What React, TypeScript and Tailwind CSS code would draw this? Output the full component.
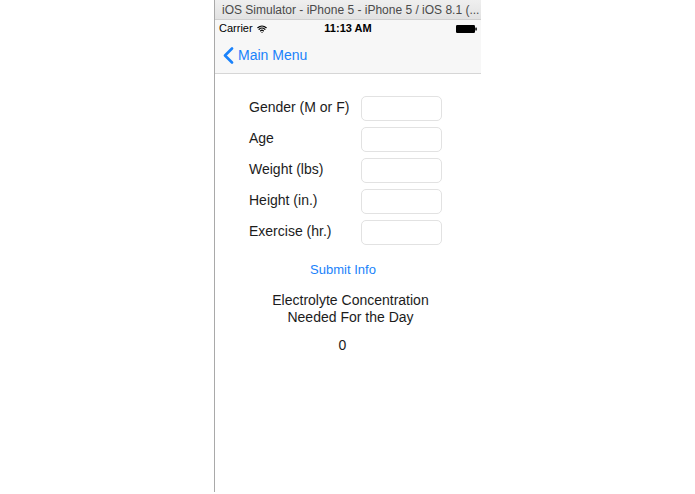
import { Wifi } from 'lucide-react';

const fields = ['Gender (M or F)', 'Age', 'Weight (lbs)', 'Height (in.)', 'Exercise (hr.)'];

const BatteryIcon = () => (
  <svg width="21" height="8" viewBox="0 0 21 8">
    <rect x="0" y="0" width="19" height="8" rx="1.2" fill="#000" />
    <rect x="19.3" y="2.5" width="1.5" height="3" rx="0.5" fill="#000" />
  </svg>
);

const BackChevron = () => (
  <svg width="11" height="17" viewBox="0 0 11 17">
    <path d="M9 1.5 L2 8.5 L9 15.5" fill="none" stroke="#1a82fb" strokeWidth="2.6" strokeLinecap="round" strokeLinejoin="round" />
  </svg>
);

const App = () => {
  return (
    <div className="w-[695px] h-[494px] bg-white overflow-hidden" style={{ fontFamily: '"Liberation Sans", Arial, sans-serif' }}>
      <div className="mx-auto w-[267px] h-[492px] border-l border-[#a9a9a9] flex flex-col">
        {/* simulator title bar */}
        <div className="h-[20px] bg-gradient-to-b from-[#efefef] to-[#e2e2e2] border-b border-[#cfcfcf] flex items-center pl-[7px] text-[12px] text-[#4a4a4a] whitespace-nowrap">
          iOS Simulator - iPhone 5 - iPhone 5 / iOS 8.1 (...
        </div>

        {/* status + nav */}
        <div className="bg-[#f7f7f7] border-b border-[#d6d6d6]">
          <div className="h-[17px] relative flex items-center px-[4px] text-[11px] text-black">
            <span className="flex items-center gap-[4px]">
              Carrier
              <Wifi size={10} strokeWidth={3} />
            </span>
            <span className="absolute left-0 right-0 text-center font-bold text-[11px] pointer-events-none">11:13 AM</span>
            <span className="ml-auto flex items-center">
              <BatteryIcon />
            </span>
          </div>
          <div className="h-[36px] flex items-center pl-[8px] gap-[4px] text-[#1a82fb] text-[14px]">
            <BackChevron />
            <span>Main Menu</span>
          </div>
        </div>

        {/* form */}
        <div className="flex flex-col items-start pt-[22px]">
          <div className="flex flex-col gap-[6px]">
            {fields.map((label) => (
              <div key={label} className="flex items-center h-[25px]">
                <span className="w-[112px] pl-[34px] box-content text-[14px] text-[#1c1c1c] whitespace-nowrap -mt-[2px]">{label}</span>
                <div className="w-[81px] h-[25px] border border-[#e2e2e2] rounded-[5px] bg-white" />
              </div>
            ))}
          </div>

          <div className="w-full text-center mt-[17px] text-[13px] leading-[16px] text-[#1a82fb] pr-[10px]">Submit Info</div>

          <div className="w-full text-center mt-[14px] text-[14px] leading-[17px] text-[#1c1c1c] pl-[5px]">
            Electrolyte Concentration
            <br />
            Needed For the Day
          </div>

          <div className="w-full text-center mt-[11px] text-[14px] leading-[17px] text-[#1c1c1c] pr-[11px]">0</div>
        </div>
      </div>
    </div>
  );
};

export default App;
